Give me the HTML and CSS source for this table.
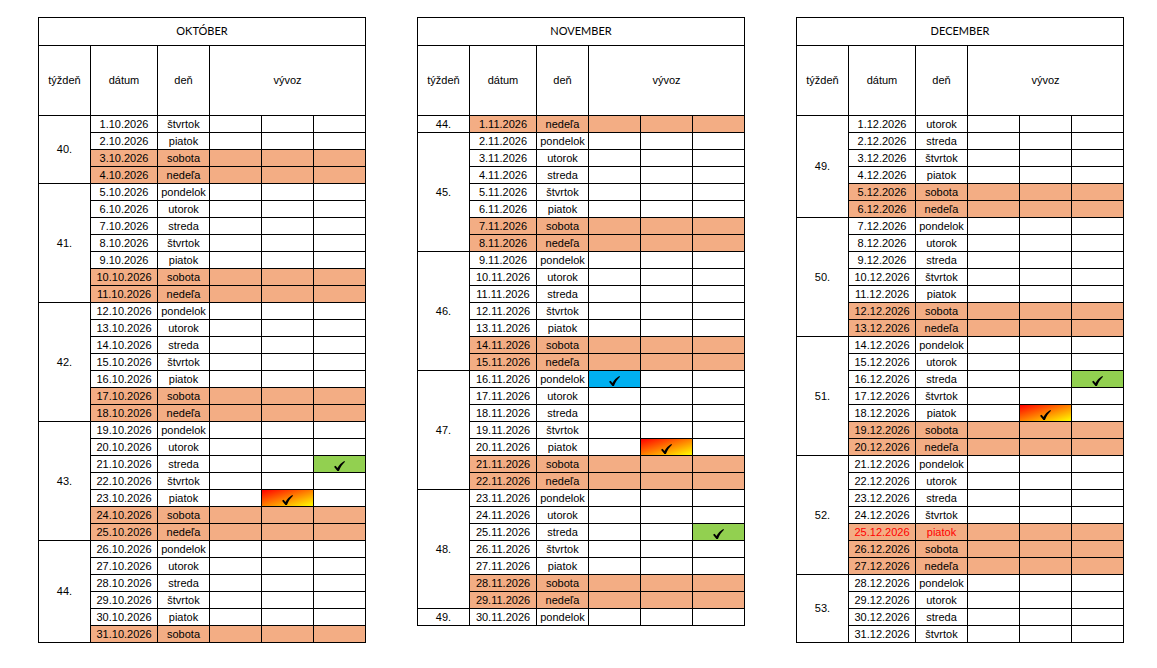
FILE: index.html
```html
<!DOCTYPE html>
<html lang="sk">
<head>
<meta charset="utf-8">
<title>Vývoz 2026</title>
<link rel="stylesheet" href="styles.css">
</head>
<body>
<svg class="defs" width="0" height="0" aria-hidden="true">
  <defs>
    <symbol id="chk" viewBox="0 0 10 9">
      <path d="M0,5.1 L1.5,4.2 L3.1,6.3 C4.6,3.8 6.6,1.5 9.4,0 L10,0.6 C7.7,2.7 5.8,5.6 4.5,9 L3.1,9 Z"/>
    </symbol>
  </defs>
</svg>
<main class="sheet">

<section class="month">
  <div class="c title">OKTÓBER</div>
  <div class="c h">týždeň</div><div class="c h">dátum</div><div class="c h">deň</div><div class="c h span3">vývoz</div>

  <div class="c wk r4">40.</div>
  <div class="row"><div class="c">1.10.2026</div><div class="c">štvrtok</div><div class="c"></div><div class="c"></div><div class="c"></div></div>
  <div class="row"><div class="c">2.10.2026</div><div class="c">piatok</div><div class="c"></div><div class="c"></div><div class="c"></div></div>
  <div class="row we"><div class="c">3.10.2026</div><div class="c">sobota</div><div class="c"></div><div class="c"></div><div class="c"></div></div>
  <div class="row we"><div class="c">4.10.2026</div><div class="c">nedeľa</div><div class="c"></div><div class="c"></div><div class="c"></div></div>

  <div class="c wk r7">41.</div>
  <div class="row"><div class="c">5.10.2026</div><div class="c">pondelok</div><div class="c"></div><div class="c"></div><div class="c"></div></div>
  <div class="row"><div class="c">6.10.2026</div><div class="c">utorok</div><div class="c"></div><div class="c"></div><div class="c"></div></div>
  <div class="row"><div class="c">7.10.2026</div><div class="c">streda</div><div class="c"></div><div class="c"></div><div class="c"></div></div>
  <div class="row"><div class="c">8.10.2026</div><div class="c">štvrtok</div><div class="c"></div><div class="c"></div><div class="c"></div></div>
  <div class="row"><div class="c">9.10.2026</div><div class="c">piatok</div><div class="c"></div><div class="c"></div><div class="c"></div></div>
  <div class="row we"><div class="c">10.10.2026</div><div class="c">sobota</div><div class="c"></div><div class="c"></div><div class="c"></div></div>
  <div class="row we"><div class="c">11.10.2026</div><div class="c">nedeľa</div><div class="c"></div><div class="c"></div><div class="c"></div></div>

  <div class="c wk r7">42.</div>
  <div class="row"><div class="c">12.10.2026</div><div class="c">pondelok</div><div class="c"></div><div class="c"></div><div class="c"></div></div>
  <div class="row"><div class="c">13.10.2026</div><div class="c">utorok</div><div class="c"></div><div class="c"></div><div class="c"></div></div>
  <div class="row"><div class="c">14.10.2026</div><div class="c">streda</div><div class="c"></div><div class="c"></div><div class="c"></div></div>
  <div class="row"><div class="c">15.10.2026</div><div class="c">štvrtok</div><div class="c"></div><div class="c"></div><div class="c"></div></div>
  <div class="row"><div class="c">16.10.2026</div><div class="c">piatok</div><div class="c"></div><div class="c"></div><div class="c"></div></div>
  <div class="row we"><div class="c">17.10.2026</div><div class="c">sobota</div><div class="c"></div><div class="c"></div><div class="c"></div></div>
  <div class="row we"><div class="c">18.10.2026</div><div class="c">nedeľa</div><div class="c"></div><div class="c"></div><div class="c"></div></div>

  <div class="c wk r7">43.</div>
  <div class="row"><div class="c">19.10.2026</div><div class="c">pondelok</div><div class="c"></div><div class="c"></div><div class="c"></div></div>
  <div class="row"><div class="c">20.10.2026</div><div class="c">utorok</div><div class="c"></div><div class="c"></div><div class="c"></div></div>
  <div class="row"><div class="c">21.10.2026</div><div class="c">streda</div><div class="c"></div><div class="c"></div><div class="c mk green"><svg class="ck"><use href="#chk"/></svg></div></div>
  <div class="row"><div class="c">22.10.2026</div><div class="c">štvrtok</div><div class="c"></div><div class="c"></div><div class="c"></div></div>
  <div class="row"><div class="c">23.10.2026</div><div class="c">piatok</div><div class="c"></div><div class="c mk grad"><svg class="ck"><use href="#chk"/></svg></div><div class="c"></div></div>
  <div class="row we"><div class="c">24.10.2026</div><div class="c">sobota</div><div class="c"></div><div class="c"></div><div class="c"></div></div>
  <div class="row we"><div class="c">25.10.2026</div><div class="c">nedeľa</div><div class="c"></div><div class="c"></div><div class="c"></div></div>

  <div class="c wk r6">44.</div>
  <div class="row"><div class="c">26.10.2026</div><div class="c">pondelok</div><div class="c"></div><div class="c"></div><div class="c"></div></div>
  <div class="row"><div class="c">27.10.2026</div><div class="c">utorok</div><div class="c"></div><div class="c"></div><div class="c"></div></div>
  <div class="row"><div class="c">28.10.2026</div><div class="c">streda</div><div class="c"></div><div class="c"></div><div class="c"></div></div>
  <div class="row"><div class="c">29.10.2026</div><div class="c">štvrtok</div><div class="c"></div><div class="c"></div><div class="c"></div></div>
  <div class="row"><div class="c">30.10.2026</div><div class="c">piatok</div><div class="c"></div><div class="c"></div><div class="c"></div></div>
  <div class="row we"><div class="c">31.10.2026</div><div class="c">sobota</div><div class="c"></div><div class="c"></div><div class="c"></div></div>
</section>

<section class="month">
  <div class="c title">NOVEMBER</div>
  <div class="c h">týždeň</div><div class="c h">dátum</div><div class="c h">deň</div><div class="c h span3">vývoz</div>

  <div class="c wk r1">44.</div>
  <div class="row we"><div class="c">1.11.2026</div><div class="c">nedeľa</div><div class="c"></div><div class="c"></div><div class="c"></div></div>

  <div class="c wk r7">45.</div>
  <div class="row"><div class="c">2.11.2026</div><div class="c">pondelok</div><div class="c"></div><div class="c"></div><div class="c"></div></div>
  <div class="row"><div class="c">3.11.2026</div><div class="c">utorok</div><div class="c"></div><div class="c"></div><div class="c"></div></div>
  <div class="row"><div class="c">4.11.2026</div><div class="c">streda</div><div class="c"></div><div class="c"></div><div class="c"></div></div>
  <div class="row"><div class="c">5.11.2026</div><div class="c">štvrtok</div><div class="c"></div><div class="c"></div><div class="c"></div></div>
  <div class="row"><div class="c">6.11.2026</div><div class="c">piatok</div><div class="c"></div><div class="c"></div><div class="c"></div></div>
  <div class="row we"><div class="c">7.11.2026</div><div class="c">sobota</div><div class="c"></div><div class="c"></div><div class="c"></div></div>
  <div class="row we"><div class="c">8.11.2026</div><div class="c">nedeľa</div><div class="c"></div><div class="c"></div><div class="c"></div></div>

  <div class="c wk r7">46.</div>
  <div class="row"><div class="c">9.11.2026</div><div class="c">pondelok</div><div class="c"></div><div class="c"></div><div class="c"></div></div>
  <div class="row"><div class="c">10.11.2026</div><div class="c">utorok</div><div class="c"></div><div class="c"></div><div class="c"></div></div>
  <div class="row"><div class="c">11.11.2026</div><div class="c">streda</div><div class="c"></div><div class="c"></div><div class="c"></div></div>
  <div class="row"><div class="c">12.11.2026</div><div class="c">štvrtok</div><div class="c"></div><div class="c"></div><div class="c"></div></div>
  <div class="row"><div class="c">13.11.2026</div><div class="c">piatok</div><div class="c"></div><div class="c"></div><div class="c"></div></div>
  <div class="row we"><div class="c">14.11.2026</div><div class="c">sobota</div><div class="c"></div><div class="c"></div><div class="c"></div></div>
  <div class="row we"><div class="c">15.11.2026</div><div class="c">nedeľa</div><div class="c"></div><div class="c"></div><div class="c"></div></div>

  <div class="c wk r7">47.</div>
  <div class="row"><div class="c">16.11.2026</div><div class="c">pondelok</div><div class="c mk blue"><svg class="ck"><use href="#chk"/></svg></div><div class="c"></div><div class="c"></div></div>
  <div class="row"><div class="c">17.11.2026</div><div class="c">utorok</div><div class="c"></div><div class="c"></div><div class="c"></div></div>
  <div class="row"><div class="c">18.11.2026</div><div class="c">streda</div><div class="c"></div><div class="c"></div><div class="c"></div></div>
  <div class="row"><div class="c">19.11.2026</div><div class="c">štvrtok</div><div class="c"></div><div class="c"></div><div class="c"></div></div>
  <div class="row"><div class="c">20.11.2026</div><div class="c">piatok</div><div class="c"></div><div class="c mk grad"><svg class="ck"><use href="#chk"/></svg></div><div class="c"></div></div>
  <div class="row we"><div class="c">21.11.2026</div><div class="c">sobota</div><div class="c"></div><div class="c"></div><div class="c"></div></div>
  <div class="row we"><div class="c">22.11.2026</div><div class="c">nedeľa</div><div class="c"></div><div class="c"></div><div class="c"></div></div>

  <div class="c wk r7">48.</div>
  <div class="row"><div class="c">23.11.2026</div><div class="c">pondelok</div><div class="c"></div><div class="c"></div><div class="c"></div></div>
  <div class="row"><div class="c">24.11.2026</div><div class="c">utorok</div><div class="c"></div><div class="c"></div><div class="c"></div></div>
  <div class="row"><div class="c">25.11.2026</div><div class="c">streda</div><div class="c"></div><div class="c"></div><div class="c mk green"><svg class="ck"><use href="#chk"/></svg></div></div>
  <div class="row"><div class="c">26.11.2026</div><div class="c">štvrtok</div><div class="c"></div><div class="c"></div><div class="c"></div></div>
  <div class="row"><div class="c">27.11.2026</div><div class="c">piatok</div><div class="c"></div><div class="c"></div><div class="c"></div></div>
  <div class="row we"><div class="c">28.11.2026</div><div class="c">sobota</div><div class="c"></div><div class="c"></div><div class="c"></div></div>
  <div class="row we"><div class="c">29.11.2026</div><div class="c">nedeľa</div><div class="c"></div><div class="c"></div><div class="c"></div></div>

  <div class="c wk r1">49.</div>
  <div class="row"><div class="c">30.11.2026</div><div class="c">pondelok</div><div class="c"></div><div class="c"></div><div class="c"></div></div>
</section>

<section class="month">
  <div class="c title">DECEMBER</div>
  <div class="c h">týždeň</div><div class="c h">dátum</div><div class="c h">deň</div><div class="c h span3">vývoz</div>

  <div class="c wk r6">49.</div>
  <div class="row"><div class="c">1.12.2026</div><div class="c">utorok</div><div class="c"></div><div class="c"></div><div class="c"></div></div>
  <div class="row"><div class="c">2.12.2026</div><div class="c">streda</div><div class="c"></div><div class="c"></div><div class="c"></div></div>
  <div class="row"><div class="c">3.12.2026</div><div class="c">štvrtok</div><div class="c"></div><div class="c"></div><div class="c"></div></div>
  <div class="row"><div class="c">4.12.2026</div><div class="c">piatok</div><div class="c"></div><div class="c"></div><div class="c"></div></div>
  <div class="row we"><div class="c">5.12.2026</div><div class="c">sobota</div><div class="c"></div><div class="c"></div><div class="c"></div></div>
  <div class="row we"><div class="c">6.12.2026</div><div class="c">nedeľa</div><div class="c"></div><div class="c"></div><div class="c"></div></div>

  <div class="c wk r7">50.</div>
  <div class="row"><div class="c">7.12.2026</div><div class="c">pondelok</div><div class="c"></div><div class="c"></div><div class="c"></div></div>
  <div class="row"><div class="c">8.12.2026</div><div class="c">utorok</div><div class="c"></div><div class="c"></div><div class="c"></div></div>
  <div class="row"><div class="c">9.12.2026</div><div class="c">streda</div><div class="c"></div><div class="c"></div><div class="c"></div></div>
  <div class="row"><div class="c">10.12.2026</div><div class="c">štvrtok</div><div class="c"></div><div class="c"></div><div class="c"></div></div>
  <div class="row"><div class="c">11.12.2026</div><div class="c">piatok</div><div class="c"></div><div class="c"></div><div class="c"></div></div>
  <div class="row we"><div class="c">12.12.2026</div><div class="c">sobota</div><div class="c"></div><div class="c"></div><div class="c"></div></div>
  <div class="row we"><div class="c">13.12.2026</div><div class="c">nedeľa</div><div class="c"></div><div class="c"></div><div class="c"></div></div>

  <div class="c wk r7">51.</div>
  <div class="row"><div class="c">14.12.2026</div><div class="c">pondelok</div><div class="c"></div><div class="c"></div><div class="c"></div></div>
  <div class="row"><div class="c">15.12.2026</div><div class="c">utorok</div><div class="c"></div><div class="c"></div><div class="c"></div></div>
  <div class="row"><div class="c">16.12.2026</div><div class="c">streda</div><div class="c"></div><div class="c"></div><div class="c mk green"><svg class="ck"><use href="#chk"/></svg></div></div>
  <div class="row"><div class="c">17.12.2026</div><div class="c">štvrtok</div><div class="c"></div><div class="c"></div><div class="c"></div></div>
  <div class="row"><div class="c">18.12.2026</div><div class="c">piatok</div><div class="c"></div><div class="c mk grad"><svg class="ck"><use href="#chk"/></svg></div><div class="c"></div></div>
  <div class="row we"><div class="c">19.12.2026</div><div class="c">sobota</div><div class="c"></div><div class="c"></div><div class="c"></div></div>
  <div class="row we"><div class="c">20.12.2026</div><div class="c">nedeľa</div><div class="c"></div><div class="c"></div><div class="c"></div></div>

  <div class="c wk r7">52.</div>
  <div class="row"><div class="c">21.12.2026</div><div class="c">pondelok</div><div class="c"></div><div class="c"></div><div class="c"></div></div>
  <div class="row"><div class="c">22.12.2026</div><div class="c">utorok</div><div class="c"></div><div class="c"></div><div class="c"></div></div>
  <div class="row"><div class="c">23.12.2026</div><div class="c">streda</div><div class="c"></div><div class="c"></div><div class="c"></div></div>
  <div class="row"><div class="c">24.12.2026</div><div class="c">štvrtok</div><div class="c"></div><div class="c"></div><div class="c"></div></div>
  <div class="row we hol"><div class="c">25.12.2026</div><div class="c">piatok</div><div class="c"></div><div class="c"></div><div class="c"></div></div>
  <div class="row we"><div class="c">26.12.2026</div><div class="c">sobota</div><div class="c"></div><div class="c"></div><div class="c"></div></div>
  <div class="row we"><div class="c">27.12.2026</div><div class="c">nedeľa</div><div class="c"></div><div class="c"></div><div class="c"></div></div>

  <div class="c wk r4">53.</div>
  <div class="row"><div class="c">28.12.2026</div><div class="c">pondelok</div><div class="c"></div><div class="c"></div><div class="c"></div></div>
  <div class="row"><div class="c">29.12.2026</div><div class="c">utorok</div><div class="c"></div><div class="c"></div><div class="c"></div></div>
  <div class="row"><div class="c">30.12.2026</div><div class="c">streda</div><div class="c"></div><div class="c"></div><div class="c"></div></div>
  <div class="row"><div class="c">31.12.2026</div><div class="c">štvrtok</div><div class="c"></div><div class="c"></div><div class="c"></div></div>
</section>

</main>
</body>
</html>
```

FILE: styles.css
```css
html, body {
  margin: 0;
  padding: 0;
  background: #ffffff;
}

body {
  font-family: "Liberation Sans", Arial, sans-serif;
  font-size: 11px;
  line-height: 16px;
  color: #000000;
}

.defs {
  position: absolute;
  width: 0;
  height: 0;
  overflow: hidden;
}

.sheet {
  display: flex;
  align-items: flex-start;
  gap: 51px;
  padding: 17px 0 0 38px;
}

.month {
  display: inline-grid;
  grid-template-columns: 51px 66px 51px 51px 51px 51px;
  grid-template-rows: 27px 69px;
  grid-auto-rows: 16px;
  gap: 1px;
  padding: 1px;
  background: #000000;
}

.row {
  display: contents;
}

.c {
  background: #ffffff;
  display: flex;
  align-items: center;
  justify-content: center;
  white-space: nowrap;
  overflow: hidden;
}

.title {
  grid-column: 1 / -1;
  font-family: Lato, "Liberation Sans", sans-serif;
  font-size: 11px;
  padding-bottom: 2px;
}

.h {
  padding-bottom: 2px;
}

.span3 {
  grid-column: span 3;
}

.wk {
  grid-column: 1;
  padding-bottom: 1px;
}

.r1 { grid-row: span 1; padding-bottom: 0; }
.r4 { grid-row: span 4; }
.r6 { grid-row: span 6; }
.r7 { grid-row: span 7; }

.we > .c {
  background: #f3ad84;
}

.hol > .c {
  color: #ff0000;
}

.mk.green {
  background: #92d050;
}

.mk.blue {
  background: #00b0f0;
}

.mk.grad {
  background: linear-gradient(to bottom right, #ff0000, #ffff00);
}

.ck {
  width: 11px;
  height: 10px;
  margin-top: 3px;
  fill: #000000;
}
```
